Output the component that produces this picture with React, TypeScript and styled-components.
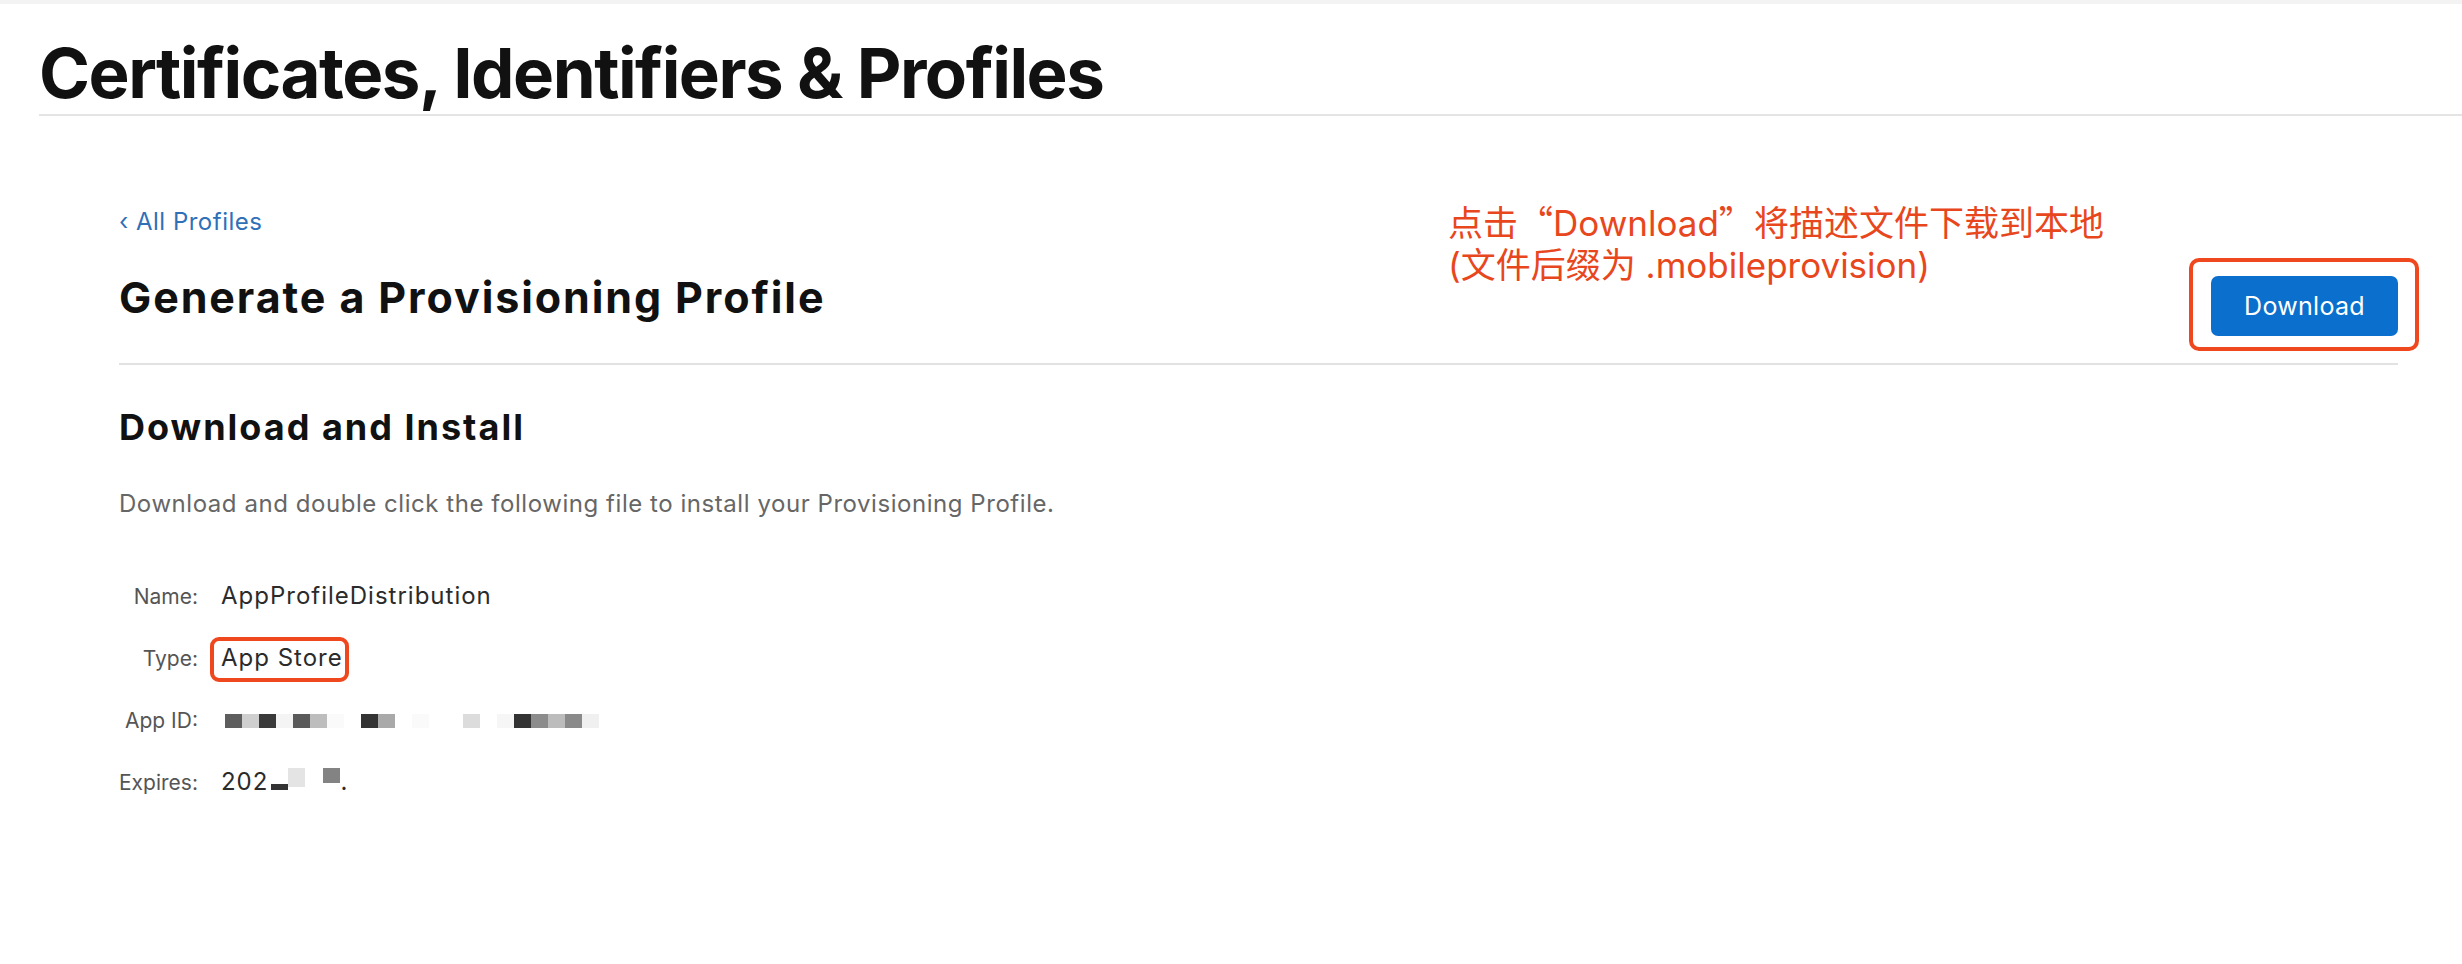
import * as React from 'react'
import styled, { createGlobalStyle } from 'styled-components'

const GlobalStyle = createGlobalStyle`
  html, body {
    margin: 0;
    padding: 0;
    background: #fff;
  }
  body {
    font-family: Inter, "Noto Sans", "Noto Sans CJK SC", sans-serif;
    color: #1d1d1f;
    -webkit-font-smoothing: antialiased;
  }
  * {
    box-sizing: border-box;
  }
`

const TopStrip = styled.div`
  height: 4px;
  background: #f3f3f3;
`

const Masthead = styled.header`
  margin-left: 39px;
  padding-top: 29px;
  padding-bottom: 1px;
  border-bottom: 2px solid #e4e4e4;
`

const SiteTitle = styled.h1`
  margin: 0;
  font-size: 69px;
  line-height: 80px;
  font-weight: 700;
  letter-spacing: -1.5px;
  color: #111;
`

const Main = styled.main`
  padding: 91px 64px 80px 119px;
`

const BackLink = styled.a`
  display: block;
  font-size: 24px;
  line-height: 30px;
  letter-spacing: 0.5px;
  color: #2f70b7;
  text-decoration: none;
  cursor: pointer;
`

const PageHeader = styled.div`
  position: relative;
  display: flex;
  justify-content: space-between;
  align-items: flex-start;
  margin-top: 35px;
  padding-bottom: 27px;
  border-bottom: 2px solid #e2e2e2;
`

const PageTitle = styled.h2`
  margin: 0;
  font-size: 43px;
  line-height: 50px;
  font-weight: 700;
  letter-spacing: 1.9px;
  color: #111;
`

const Note = styled.div`
  position: absolute;
  left: 1329px;
  top: -72px;
  font-family: Inter, "Noto Sans CJK SC", sans-serif;
  font-size: 35px;
  line-height: 42px;
  color: #e8471d;
  white-space: nowrap;
`

const CjkQuote = styled.span`
  font-family: "Noto Sans CJK SC", sans-serif;
`

const Highlight = styled.span<{ $t: number; $r: number; $b: number; $l: number; $radius: number }>`
  position: relative;
  display: inline-block;
  &::after {
    content: '';
    position: absolute;
    top: -${p => p.$t}px;
    right: -${p => p.$r}px;
    bottom: -${p => p.$b}px;
    left: -${p => p.$l}px;
    border: 4px solid #f0481e;
    border-radius: ${p => p.$radius}px;
    pointer-events: none;
  }
`

const ButtonHighlight = styled(Highlight)`
  margin-top: 4px;
`

const PrimaryButton = styled.button`
  display: block;
  width: 187px;
  height: 60px;
  border: 0;
  border-radius: 7px;
  background: #0a6fcd;
  color: #fff;
  font-family: Inter, sans-serif;
  font-size: 25px;
  letter-spacing: 0.3px;
  cursor: pointer;
`

const SectionTitle = styled.h3`
  margin: 40px 0 0;
  font-size: 36px;
  line-height: 44px;
  font-weight: 700;
  letter-spacing: 2px;
  color: #111;
`

const Description = styled.p`
  margin: 40px 0 0;
  font-size: 24px;
  line-height: 30px;
  letter-spacing: 0.55px;
  color: #666;
`

const Details = styled.dl`
  display: grid;
  grid-template-columns: max-content 1fr;
  grid-auto-rows: 30px;
  column-gap: 23px;
  row-gap: 32px;
  align-items: baseline;
  margin: 62px 0 0;
`

const Label = styled.dt`
  justify-self: end;
  font-size: 21px;
  line-height: 30px;
  color: #555;
`

const Value = styled.dd`
  margin: 0;
  font-size: 24px;
  line-height: 30px;
  letter-spacing: 1px;
  color: #2b2b2b;
`

const Mosaic = styled.span`
  display: inline-flex;
  align-items: flex-end;
  vertical-align: baseline;
  padding-bottom: 3px;
`

const Tile = styled.span<{ $w: number; $h: number; $c: string; $lift?: number }>`
  display: inline-block;
  width: ${p => p.$w}px;
  height: ${p => p.$h}px;
  background: ${p => p.$c};
  margin-bottom: ${p => p.$lift || 0}px;
`

type TileSpec = [number, number, string, number?]

const appIdTiles: TileSpec[] = [
  [4, 14, '#fff'], [17, 14, '#5e5e5e'], [17, 14, '#cfcfcf'], [17, 14, '#3a3a3a'], [17, 14, '#f4f4f4'],
  [17, 14, '#5a5a5a'], [17, 14, '#bdbdbd'], [17, 14, '#fafafa'], [17, 14, '#fff'],
  [17, 14, '#333'], [17, 14, '#a9a9a9'], [17, 14, '#fff'], [17, 14, '#fafafa'],
  [17, 14, '#fff'], [17, 14, '#fff'], [17, 14, '#dcdcdc'], [17, 14, '#fff'],
  [17, 14, '#f6f6f6'], [17, 14, '#333'], [17, 14, '#8c8c8c'], [17, 14, '#bcbcbc'],
  [17, 14, '#8a8a8a'], [17, 14, '#f0f0f0']
]

const expiresTiles: TileSpec[] = [
  [3, 1, '#fff'], [17, 6, '#333', 0], [17, 19, '#e4e4e4', 3], [18, 1, '#fff'], [17, 15, '#838383', 7]
]

function renderTiles(tiles: TileSpec[]) {
  return tiles.map(([w, h, c, lift], i) => <Tile key={i} $w={w} $h={h} $c={c} $lift={lift} />)
}

export default function App() {
  return (
    <>
      <GlobalStyle />
      <TopStrip />
      <Masthead>
        <SiteTitle>Certificates, Identifiers &amp; Profiles</SiteTitle>
      </Masthead>
      <Main>
        <BackLink>‹ All Profiles</BackLink>
        <PageHeader>
          <PageTitle>Generate a Provisioning Profile</PageTitle>
          <Note>
            点击<CjkQuote>“</CjkQuote>Download<CjkQuote>”</CjkQuote>将描述文件下载到本地
            <br />
            (文件后缀为 .mobileprovision)
          </Note>
          <ButtonHighlight $t={18} $r={21} $b={15} $l={22} $radius={10}>
            <PrimaryButton>Download</PrimaryButton>
          </ButtonHighlight>
        </PageHeader>
        <SectionTitle>Download and Install</SectionTitle>
        <Description>Download and double click the following file to install your Provisioning Profile.</Description>
        <Details>
          <Label>Name:</Label>
          <Value>AppProfileDistribution</Value>
          <Label>Type:</Label>
          <Value>
            <Highlight $t={6} $r={6} $b={9} $l={11} $radius={9}>App Store</Highlight>
          </Value>
          <Label>App ID:</Label>
          <Value>
            <Mosaic>{renderTiles(appIdTiles)}</Mosaic>
          </Value>
          <Label>Expires:</Label>
          <Value>
            202<Mosaic>{renderTiles(expiresTiles)}</Mosaic>.
          </Value>
        </Details>
      </Main>
    </>
  )
}
